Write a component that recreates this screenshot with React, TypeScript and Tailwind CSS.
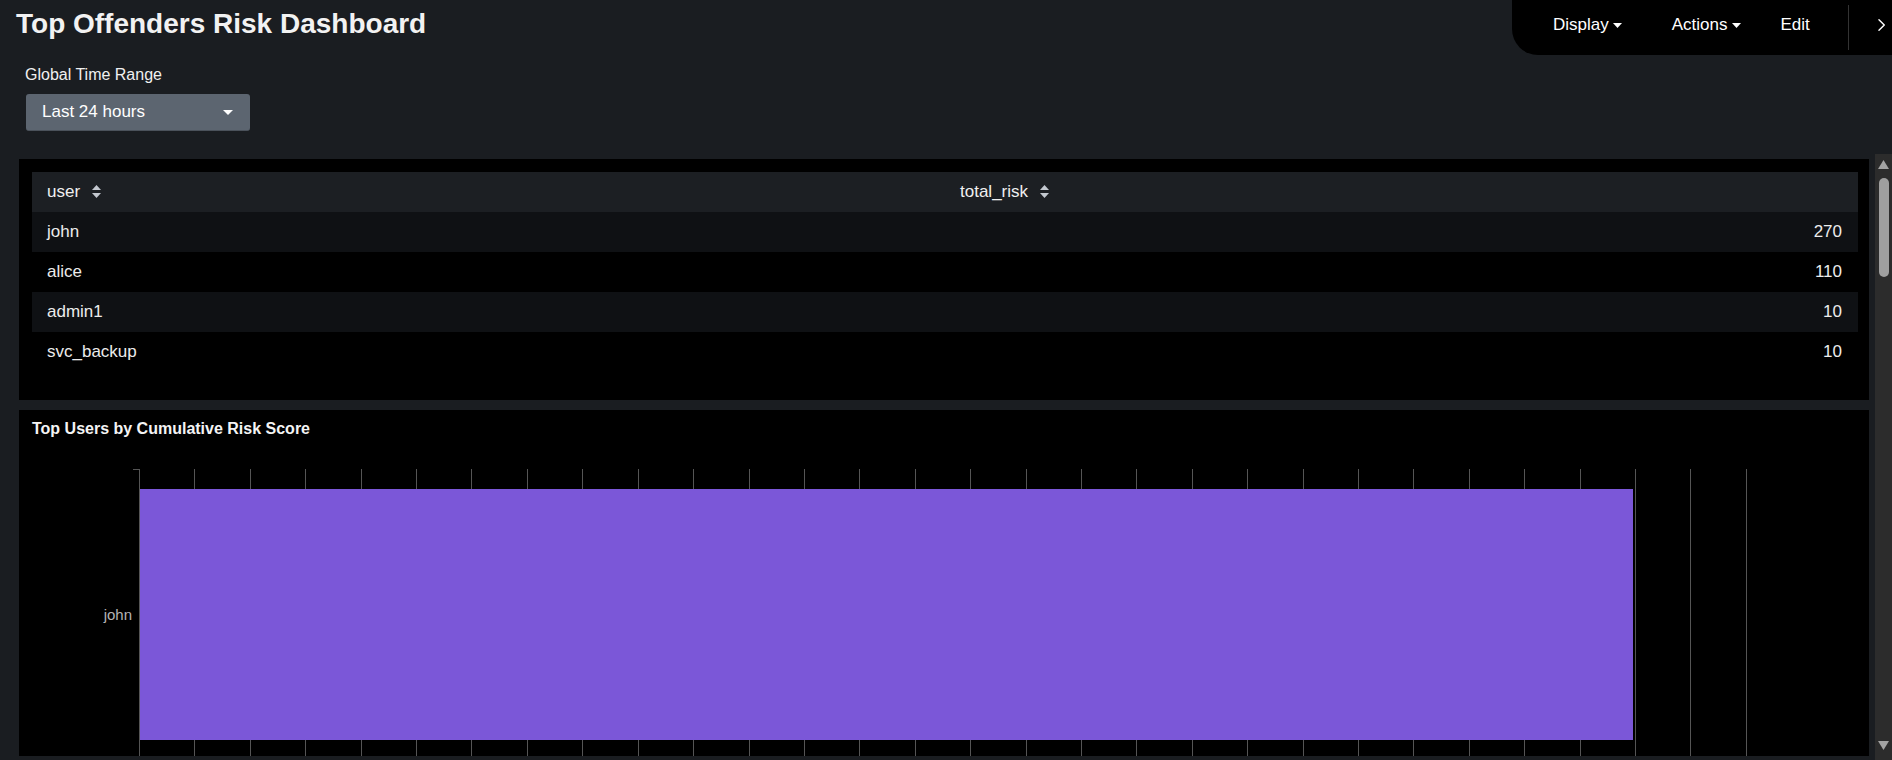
import { ChevronRight } from 'lucide-react';

const rows = [
  { user: 'john', risk: 270 },
  { user: 'alice', risk: 110 },
  { user: 'admin1', risk: 10 },
  { user: 'svc_backup', risk: 10 },
];

function Caret() {
  return (
    <svg width="9" height="5" viewBox="0 0 9 5" className="shrink-0">
      <path d="M0 0h9L4.5 5z" fill="#fff" />
    </svg>
  );
}

function SortIcon() {
  return (
    <svg width="9" height="14" viewBox="0 0 9 14" className="shrink-0">
      <path d="M4.5 0L9 5H0z" fill="#c3c8cf" />
      <path d="M0 8h9L4.5 13z" fill="#c3c8cf" />
    </svg>
  );
}

function RiskChart() {
  // ticks every 10 on the x axis, 30 grid lines
  const lines = Array.from({ length: 30 }, (_, i) => Math.round(120 + i * 55.41) + 0.5);
  const barEnd = 1614;
  return (
    <svg width="1849" height="290" className="block">
      {lines.map((x) => (
        <line key={x} x1={x} x2={x} y1={1} y2={290} stroke="#555" strokeWidth={1} />
      ))}
      <line x1={114} x2={121} y1={1.5} y2={1.5} stroke="#555" strokeWidth={1} />
      <rect x={121} y={21} width={barEnd - 121} height={251} fill="#7b57d8" />
      <text x={113} y={152} fill="#b4b4b4" fontSize="15" textAnchor="end" fontFamily="Liberation Sans, Arial, sans-serif">
        john
      </text>
    </svg>
  );
}

export default function App() {
  return (
    <div className="w-[1892px] h-[760px] bg-[#1a1d21] text-white flex flex-col overflow-hidden font-['Liberation_Sans',Arial,sans-serif]">
      {/* Header */}
      <div className="flex items-start h-[55px]">
        <h1 className="pl-4 pt-[7px] text-[28px] leading-[34px] font-semibold text-[#f2f2f2]">Top Offenders Risk Dashboard</h1>
        <div className="ml-auto w-[380px] h-[55px] bg-black rounded-bl-[26px] flex items-center pl-[41px] pb-[5px] text-[17px]">
          <div className="flex items-center gap-1">
            <span>Display</span>
            <Caret />
          </div>
          <div className="flex items-center gap-1 ml-[50px]">
            <span>Actions</span>
            <Caret />
          </div>
          <span className="ml-10">Edit</span>
          <div className="ml-[38px] w-px h-[45px] bg-[#333] mt-[5px]" />
          <ChevronRight size={22} strokeWidth={1.6} className="ml-[22px] text-white" />
        </div>
      </div>

      {/* Time range input */}
      <div className="pl-[25px] pt-[10px]">
        <div className="text-[16px] leading-5 text-[#f0f0f0]">Global Time Range</div>
        <div className="mt-[9px] ml-px w-[224px] h-[37px] bg-[#5c6570] rounded-[3px] border-b border-[#4b525b] flex items-center justify-between pl-[16px] pr-[17px] text-[17px]">
          <span>Last 24 hours</span>
          <svg width="10" height="5" viewBox="0 0 10 5">
            <path d="M0 0h10L5 5z" fill="#fff" />
          </svg>
        </div>
      </div>

      {/* Scrollable panels */}
      <div className="mt-[23px] flex flex-1 min-h-0">
        <div className="flex-1 pt-[5px] pl-[19px] pr-[6px] overflow-hidden">
          {/* Table panel */}
          <div className="h-[241px] bg-black pt-[13px] pl-[13px] pr-[11px]">
            <div className="grid grid-cols-2 h-10 bg-[#1c1f23] text-[17px] text-[#f0f0f0]">
              <div className="flex items-center gap-3 px-[15px]">
                <span>user</span>
                <SortIcon />
              </div>
              <div className="flex items-center gap-3 px-[15px]">
                <span>total_risk</span>
                <SortIcon />
              </div>
            </div>
            {rows.map((r, i) => (
              <div
                key={r.user}
                className={`grid grid-cols-2 h-10 items-center text-[17px] text-[#ececec] ${i % 2 === 0 ? 'bg-[#0f1114]' : 'bg-black'}`}
              >
                <div className="px-[15px]">{r.user}</div>
                <div className="px-4 text-right">{r.risk}</div>
              </div>
            ))}
          </div>

          {/* Chart panel */}
          <div className="mt-[10px] h-[346px] bg-black overflow-hidden">
            <div className="pt-[9px] px-[13px] text-[16px] leading-5 font-bold text-[#f4f4f4]">Top Users by Cumulative Risk Score</div>
            <div className="mt-[29px]">
              <RiskChart />
            </div>
          </div>
        </div>

        {/* Scrollbar */}
        <div className="w-[17px] bg-[#2c2c2c] flex flex-col items-center pt-[6px] pb-[10px]">
          <svg width="11" height="9" viewBox="0 0 11 9">
            <path d="M5.5 0L11 9H0z" fill="#a3a3a3" />
          </svg>
          <div className="mt-[9px] w-[10px] h-[99px] rounded-full bg-[#9f9f9f]" />
          <div className="flex-1" />
          <svg width="11" height="9" viewBox="0 0 11 9">
            <path d="M0 0h11L5.5 9z" fill="#a3a3a3" />
          </svg>
        </div>
      </div>
    </div>
  );
}
